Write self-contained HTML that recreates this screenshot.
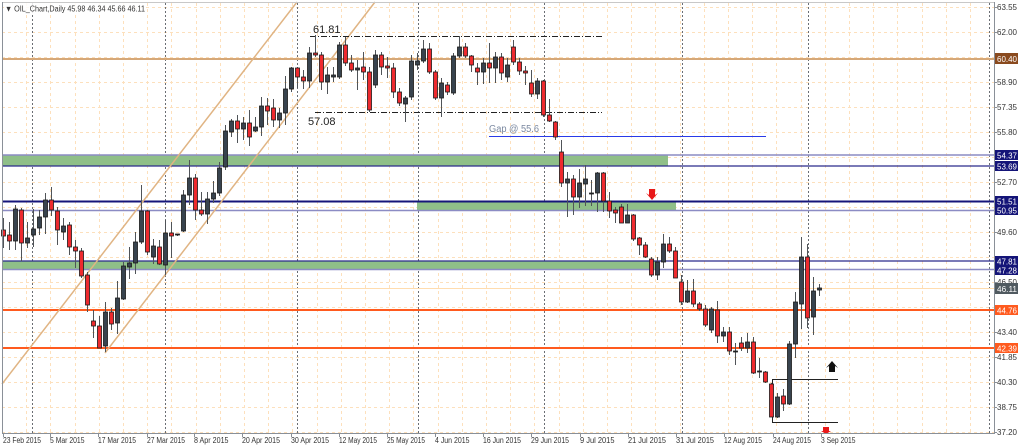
<!DOCTYPE html>
<html><head><meta charset="utf-8">
<style>
html,body{margin:0;padding:0;background:#fff;}
body{width:1024px;height:447px;overflow:hidden;}
svg{display:block;font-family:"Liberation Sans",sans-serif;}
</style></head>
<body>
<svg id="c" width="1024" height="447" viewBox="0 0 1024 447" xmlns="http://www.w3.org/2000/svg">
<rect x="0" y="0" width="1024" height="447" fill="#fff"/>
<g id="grid"></g>
<rect x="2" y="155" width="666" height="11" fill="#8fbf88"/>
<rect x="417" y="201" width="259" height="9" fill="#8fbf88"/>
<rect x="2" y="261" width="655" height="8" fill="#8fbf88"/>
<line x1="2" y1="59" x2="994" y2="59" stroke="#d6a878" stroke-width="2"/>
<line x1="2" y1="155" x2="994" y2="155" stroke="#8c8cc4" stroke-width="1.5"/>
<line x1="2" y1="166" x2="994" y2="166" stroke="#2a2a8c" stroke-width="1.2"/>
<line x1="2" y1="201.5" x2="994" y2="201.5" stroke="#15157a" stroke-width="2"/>
<line x1="2" y1="210.5" x2="994" y2="210.5" stroke="#8c8cc4" stroke-width="1.5"/>
<line x1="2" y1="261" x2="994" y2="261" stroke="#2a2a8c" stroke-width="1.2"/>
<line x1="2" y1="269.5" x2="994" y2="269.5" stroke="#8c8cc4" stroke-width="1.5"/>
<line x1="2" y1="288.5" x2="994" y2="288.5" stroke="#ffdcae" stroke-width="1"/>
<line x1="2" y1="310" x2="994" y2="310" stroke="#ff5a1e" stroke-width="2"/>
<line x1="2" y1="348" x2="994" y2="348" stroke="#ff5a1e" stroke-width="2"/>
<line x1="489" y1="136.5" x2="766" y2="136.5" stroke="#2a3ae8" stroke-width="1"/>
<text x="489" y="132" font-size="10" fill="#7a88a0" textLength="50" lengthAdjust="spacingAndGlyphs">Gap @ 55.6</text>
<line x1="2" y1="384" x2="297" y2="2" stroke="#e0b483" stroke-width="1.5"/>
<line x1="105" y1="353" x2="375" y2="2" stroke="#e0b483" stroke-width="1.5"/>
<line x1="310" y1="36.5" x2="604" y2="36.5" stroke="#222" stroke-width="1" stroke-dasharray="6,2,1,2"/>
<line x1="315" y1="112.5" x2="602" y2="112.5" stroke="#222" stroke-width="1" stroke-dasharray="6,2,1,2"/>
<text x="313" y="33" font-size="11" fill="#222">61.81</text>
<text x="308" y="125" font-size="11" fill="#222">57.08</text>
<polyline points="838,379.5 772.5,379.5 772.5,422.5 838,422.5" fill="none" stroke="#222" stroke-width="1"/>
<g id="candles"></g>
<path d="M649 189 L649 195 L646 193 L652 200 L658 193 L655 195 L655 189 Z" fill="#e81818"/>
<path d="M829 372 L829 366 L826 368 L832 361 L838 368 L835 366 L835 372 Z" fill="#111"/>
<path d="M823 427 L823 431 L821 431 L826 434 L831 431 L829 431 L829 427 Z" fill="#e81818"/>
<line x1="2" y1="433.5" x2="994" y2="433.5" stroke="#8a9098" stroke-width="1"/>
<line x1="994.5" y1="2" x2="994.5" y2="434" stroke="#8a9098" stroke-width="1"/>
<line x1="2" y1="2.5" x2="994" y2="2.5" stroke="#c8c8c8" stroke-width="1"/>
<line x1="2.5" y1="2" x2="2.5" y2="434" stroke="#8a9098" stroke-width="1"/>
<g id="ticks"></g>
<g class="fit" font-size="8" fill="#333">
<text x="997" y="10">63.55</text>
<text x="997" y="35">62.00</text>
<text x="997" y="85">58.90</text>
<text x="997" y="110">57.35</text>
<text x="997" y="135">55.80</text>
<text x="997" y="185">52.70</text>
<text x="997" y="235">49.60</text>
<text x="997" y="285">46.50</text>
<text x="997" y="335">43.40</text>
<text x="997" y="360">41.85</text>
<text x="997" y="385">40.30</text>
<text x="997" y="410">38.75</text>
<text x="997" y="435">37.20</text>
</g>
<g font-size="8" fill="#fff">
<rect x="995" y="53" width="23" height="11" fill="#8a4a1e"/>
<rect x="995" y="150" width="23" height="10" fill="#141478"/>
<rect x="995" y="161" width="23" height="10" fill="#141478"/>
<rect x="995" y="196" width="23" height="10" fill="#141478"/>
<rect x="995" y="205" width="23" height="10" fill="#141478"/>
<rect x="995" y="256" width="23" height="10" fill="#141478"/>
<rect x="995" y="265" width="23" height="10" fill="#141478"/>
<rect x="995" y="283" width="23" height="11" fill="#505a60"/>
<rect x="995" y="305" width="23" height="10" fill="#ff5a1e"/>
<rect x="995" y="343" width="23" height="10" fill="#ff5a1e"/>
</g>
<g class="fit" font-size="8" fill="#fff">
<text x="997" y="62">60.40</text>
<text x="997" y="158.5">54.37</text>
<text x="997" y="169.5">53.69</text>
<text x="997" y="204.5">51.51</text>
<text x="997" y="213.5">50.95</text>
<text x="997" y="264.5">47.81</text>
<text x="997" y="273.5">47.28</text>
<text x="997" y="292">46.11</text>
<text x="997" y="313.5">44.76</text>
<text x="997" y="351.5">42.39</text>
</g>
<g class="fit" font-size="8" fill="#333">
<text x="3" y="443">23 Feb 2015</text>
<text x="50" y="443">5 Mar 2015</text>
<text x="98" y="443">17 Mar 2015</text>
<text x="147" y="443">27 Mar 2015</text>
<text x="194" y="443">8 Apr 2015</text>
<text x="242" y="443">20 Apr 2015</text>
<text x="291" y="443">30 Apr 2015</text>
<text x="339" y="443">12 May 2015</text>
<text x="387" y="443">25 May 2015</text>
<text x="435" y="443">4 Jun 2015</text>
<text x="483" y="443">16 Jun 2015</text>
<text x="531" y="443">29 Jun 2015</text>
<text x="580" y="443">9 Jul 2015</text>
<text x="628" y="443">21 Jul 2015</text>
<text x="676" y="443">31 Jul 2015</text>
<text x="724" y="443">12 Aug 2015</text>
<text x="773" y="443">24 Aug 2015</text>
<text x="821" y="443">3 Sep 2015</text>
</g>
<rect x="4" y="3" width="142" height="11" fill="#fff" opacity="0.85"/>
<text x="5" y="11.5" font-size="8" fill="#333" textLength="140" lengthAdjust="spacingAndGlyphs">▼ OIL_Chart,Daily  45.98 46.34 45.66 46.11</text>
</svg>
<script>
(function(){
var NS="http://www.w3.org/2000/svg";
function el(p,t,a){var e=document.createElementNS(NS,t);for(var k in a)e.setAttribute(k,a[k]);p.appendChild(e);return e;}
document.querySelectorAll(".fit text").forEach(function(t){
 var n=t.textContent.length;var w=n===5?20:n*3.45;
 t.setAttribute("textLength",w.toFixed(1));t.setAttribute("lengthAdjust","spacingAndGlyphs");
});
var g=document.getElementById("grid");
for(var i=0;i<18;i++){var y=7+25*i+0.5;el(g,"line",{x1:2,y1:y,x2:994,y2:y,stroke:"#fde0bc","stroke-width":1,"stroke-dasharray":"3,3"});}
for(var k=0;k<41;k++){var x=Math.round(2+24.2*k)+0.5;if(x>990)break;el(g,"line",{x1:x,y1:3,x2:x,y2:433,stroke:"#fde0bc","stroke-width":1,"stroke-dasharray":"3,3"});}
[32,165,297,418,544,682,808,989].forEach(function(x){el(g,"line",{x1:x+0.5,y1:3,x2:x+0.5,y2:433,stroke:"#6a6e74","stroke-width":1,"stroke-dasharray":"2,2"});});
var t=document.getElementById("ticks");
[3,50,98,147,194,242,291,339,387,435,483,531,580,628,676,724,773,821].forEach(function(x){el(t,"line",{x1:x+0.5,y1:433,x2:x+0.5,y2:437,stroke:"#8a9098"});});
for(var i=0;i<18;i++){var y=7+25*i+0.5;el(t,"line",{x1:994,y1:y,x2:997,y2:y,stroke:"#8a9098"});}
var C=[
[0,230,236,218,248],[0,235,241,222,250],[1,209,241,205,250],[0,210,243,208,261],[1,238,243,222,248],
[1,229,235,209,247],[1,217,228,210,235],[1,200,217,193,234],[0,200,210,187,216],[0,211,230,207,245],
[1,226,232,218,240],[0,225,247,222,255],[0,247,251,240,268],[0,251,276,248,278],[0,275,305,272,312],
[0,321,326,310,338],[0,326,348,316,348],[1,312,346,302,352],[0,312,324,308,330],[1,298,323,281,334],
[1,266,299,262,300],[1,263,267,247,279],[1,242,263,232,274],[1,211,242,185,244],[0,211,252,210,255],
[1,246,257,239,264],[0,247,264,240,265],[1,233,265,220,275],[0,233,236,222,258],[1,234,235,234,236],
[1,195,231,190,232],[1,178,195,160,205],[0,178,210,174,220],[0,210,214,192,216],[1,199,214,192,224],
[1,193,199,181,203],[1,168,193,162,196],[1,131,167,125,170],[1,121,132,119,137],[0,121,129,115,143],
[1,123,129,117,140],[0,123,137,110,146],[1,127,131,117,132],[1,106,127,97,136],[0,106,111,98,125],
[0,108,120,99,127],[1,113,120,108,128],[1,89,113,76,125],[1,68,89,67,92],[0,68,77,67,88],
[0,77,81,70,89],[1,53,81,47,88],[0,53,55,35,57],[0,55,82,52,90],[1,75,82,67,94],
[1,75,77,67,82],[1,45,77,42,79],[0,45,63,37,66],[0,63,70,55,72],[1,68,70,60,90],
[0,67,72,52,80],[0,72,110,67,112],[1,55,85,50,88],[0,55,67,52,75],[0,66,68,57,78],
[0,68,92,63,98],[0,92,103,88,106],[1,98,104,96,122],[1,61,97,55,100],[1,61,65,53,70],
[1,49,61,40,63],[0,49,72,43,74],[0,72,98,70,100],[1,83,98,78,117],[0,85,92,82,95],
[1,56,93,53,95],[1,47,56,36,58],[0,47,56,43,58],[0,56,65,55,72],[0,68,72,63,85],
[1,63,72,58,84],[0,63,68,43,83],[1,57,68,52,83],[0,57,73,53,80],[1,65,77,58,82],
[0,47,62,40,65],[0,62,71,58,75],[0,71,73,66,85],[0,83,94,70,97],[1,81,94,78,99],
[0,81,115,80,117],[0,115,121,99,122],[0,122,137,121,140],[0,152,183,140,187],[1,179,183,172,217],
[0,179,197,175,215],[1,183,197,169,208],[1,179,184,165,206],[1,193,194,180,206],[1,173,193,172,212],
[0,173,201,172,212],[0,201,211,192,218],[0,210,213,207,223],[0,207,223,204,223],[1,215,223,204,223],
[0,215,239,214,241],[0,238,245,237,255],[0,245,257,242,258],[0,259,275,257,277],[1,262,275,257,280],
[1,244,262,234,268],[0,244,251,237,253],[0,251,278,247,278],[0,282,302,275,305],[1,291,302,280,303],
[0,291,304,279,307],[0,304,309,302,311],[0,309,325,305,327],[1,309,330,307,333],[0,310,336,301,343],
[1,332,336,327,342],[0,332,351,327,355],[1,351,352,343,365],[0,343,348,337,351],[1,342,348,333,353],
[0,342,373,337,374],[1,371,372,358,378],[0,372,382,371,383],[0,384,417,383,417],[1,397,417,393,418],
[0,396,404,389,411],[1,344,404,341,405],[1,302,344,292,358],[1,257,304,237,329],[0,257,318,244,328],
[1,291,317,277,335],[1,288,290,284,296]
];
var cg=document.getElementById("candles");
C.forEach(function(c,i){
 var x=3+6*i;
 var fill=c[0]?"#38434e":"#ee2a2e";
 el(cg,"line",{x1:x+0.5,y1:c[3],x2:x+0.5,y2:c[4],stroke:"#505458","stroke-width":1});
 var h=Math.max(1,c[2]-c[1]);
 el(cg,"rect",{x:x-1.5,y:c[1],width:4,height:h,fill:fill,stroke:"#1a1a1a","stroke-width":0.8});
});
})();
</script>
</body></html>
